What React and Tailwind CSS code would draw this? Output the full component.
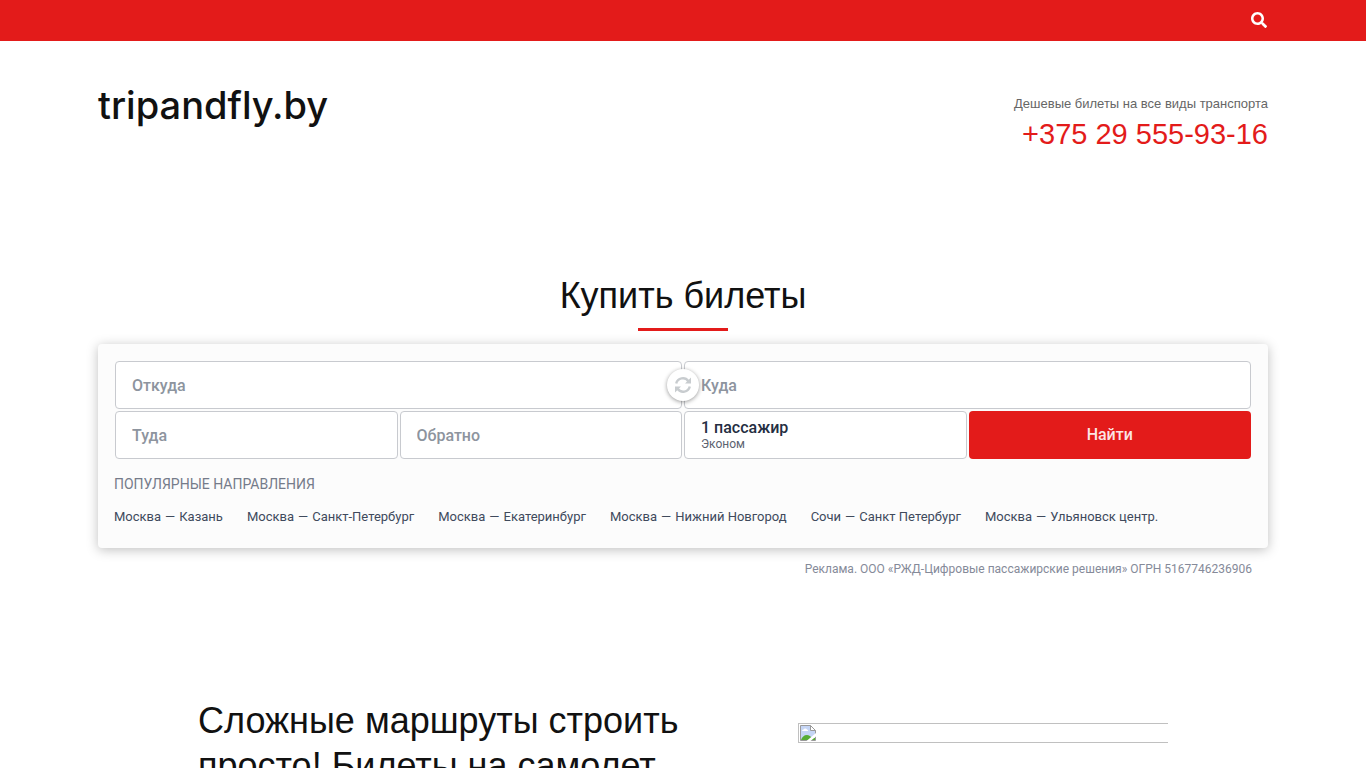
import React, { useState } from 'react';
import { FaSearch } from 'react-icons/fa';

const routes = [
  { id: 1, from: 'Москва', to: 'Казань' },
  { id: 2, from: 'Москва', to: 'Санкт-Петербург' },
  { id: 3, from: 'Москва', to: 'Екатеринбург' },
  { id: 4, from: 'Москва', to: 'Нижний Новгород' },
  { id: 5, from: 'Сочи', to: 'Санкт Петербург' },
  { id: 6, from: 'Москва', to: 'Ульяновск центр.' },
];

const SwapIcon = () => (
  <svg width="16" height="16" viewBox="0 0 16 16" fill="none" aria-hidden="true">
    <path d="M1.200 6.500A6.800 6.800 0 0 1 13.400 4.200M14.800 9.500A6.800 6.800 0 0 1 2.600 11.800" stroke="#c8cccf" strokeWidth="2.400" />
    <path d="M16 .5v6h-6zM0 15.500v-6h6z" fill="#c8cccf" />
  </svg>
);

const BrokenImageIcon = () => (
  <svg width="16" height="16" viewBox="0 0 16 16" aria-hidden="true">
    <path d="M.5.5h10l5 5v10H.5z" fill="#c5d5f5" stroke="#9a9a9a" />
    <path d="M2 6a1.500 1.500 0 0 1 1.500-1.500 2 2 0 0 1 3.500 0A1.200 1.200 0 0 1 8 6z" fill="#fff" />
    <path d="M1 15c1-3 3-5 6-5 2 0 3 1 4 2l4 1v2z" fill="#57ad35" />
    <path d="M10.500.5v5h5z" fill="#fff" stroke="#9a9a9a" />
    <path d="M16 8v3.500L10.500 16H6.500z" fill="#fff" />
  </svg>
);

const Field = ({ name, label, value, onChange, className }) => (
  <input
    name={name}
    type="text"
    aria-label={label}
    placeholder={label}
    value={value}
    onChange={onChange}
    className={`h-12 w-full min-w-0 px-4 bg-white border border-[#c8cacf] rounded text-base font-medium text-[#242e42] placeholder-[#8d949e] outline-none ${className}`}
  />
);

const App = () => {
  const [form, setForm] = useState({ from: '', to: '', departure: '', back: '' });

  const handleChange = (e) => {
    const { name, value } = e.target;
    setForm(prev => ({ ...prev, [name]: value }));
  };

  const swapCities = () => {
    setForm(prev => ({ ...prev, from: prev.to, to: prev.from }));
  };

  return (
    <div className="bg-white text-[#111111] font-['Liberation_Sans',sans-serif]">
      {/* Top bar */}
      <div className="bg-[#e31b1a]">
        <div className="max-w-[1170px] mx-auto h-[41px] pr-px flex items-center justify-end">
          <button type="button" aria-label="Поиск" className="text-white pb-px">
            <FaSearch className="size-4" />
          </button>
        </div>
      </div>

      <header className="max-w-[1170px] mx-auto pt-11 flex items-start justify-between">
        <a href="#" className="text-[38px] leading-10 font-medium font-['Inter',sans-serif]">
          tripandfly.by
        </a>
        <div className="text-right pt-[9px]">
          <p className="text-[13px] leading-5 text-[#666666]">Дешевые билеты на все виды транспорта</p>
          <a href="tel:+375295559316" className="block text-[29px] leading-10 text-[#e31b1a]">
            +375 29 555-93-16
          </a>
        </div>
      </header>

      <main>
        <section className="max-w-[1170px] mx-auto pt-[119px]">
          <h1 className="text-4xl leading-[45px] text-center">Купить билеты</h1>
          <div className="w-[90px] h-[3px] mx-auto mt-2.5 bg-[#e31b1a]" />

          {/* Search form */}
          <div className="mt-[13px] font-['Roboto',sans-serif]">
            <form
              onSubmit={(e) => e.preventDefault()}
              className="p-4 pb-[21px] bg-[#fcfcfc] rounded shadow-[0_2px_12px_rgba(0,0,0,0.25)]"
            >
              <div className="relative grid grid-cols-4 gap-0.5 p-px">
                <Field name="from" label="Откуда" value={form.from} onChange={handleChange} className="col-span-2" />
                <Field name="to" label="Куда" value={form.to} onChange={handleChange} className="col-span-2" />
                <Field name="departure" label="Туда" value={form.departure} onChange={handleChange} className="" />
                <Field name="back" label="Обратно" value={form.back} onChange={handleChange} className="" />
                <button
                  type="button"
                  className="h-12 px-4 pt-px bg-white border border-[#c8cacf] rounded text-left text-[#242e42]"
                >
                  <span className="block text-base leading-4 font-medium">1 пассажир</span>
                  <span className="block text-xs leading-4 text-[#5c6370]">Эконом</span>
                </button>
                <button type="submit" className="h-12 rounded bg-[#e31b1a] text-[#fce4e4] text-base font-medium">
                  Найти
                </button>
                <button
                  type="button"
                  aria-label="Поменять местами"
                  onClick={swapCities}
                  className="absolute top-[9px] left-1/2 -translate-x-1/2 size-8 flex items-center justify-center bg-white rounded-full shadow-[0_1px_4px_rgba(0,0,0,0.4)]"
                >
                  <SwapIcon />
                </button>
              </div>

              <h2 className="mt-3.5 text-sm leading-5 uppercase text-[#757b8a]">Популярные направления</h2>
              <ul className="mt-[13px] flex flex-wrap gap-x-6 text-[13px] leading-5 text-[#404a5c]">
                {routes.map(route => (
                  <li key={route.id}>
                    <a href="#" className="flex gap-1">
                      <span>{route.from}</span>
                      <span>—</span>
                      <span>{route.to}</span>
                    </a>
                  </li>
                ))}
              </ul>
            </form>
            <p className="mt-[11px] pr-4 text-right text-xs leading-5 text-[#858a99]">
              Реклама. ООО «РЖД-Цифровые пассажирские решения» ОГРН 5167746236906
            </p>
          </div>
        </section>

        <section className="max-w-[970px] mx-auto pt-[119px] flex justify-between">
          <h2 className="w-1/2 text-4xl leading-[45px]">Сложные маршруты строить просто! Билеты на самолет</h2>
          <div className="mt-[25px] w-[370px] h-5 p-px border border-r-0 border-[#c0c0c0]">
            <BrokenImageIcon />
          </div>
        </section>
      </main>
    </div>
  );
};

export default App;
